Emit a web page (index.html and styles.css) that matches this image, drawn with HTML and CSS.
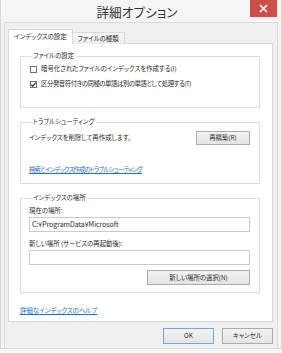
FILE: index.html
```html
<!DOCTYPE html>
<html lang="ja">
<head>
<meta charset="utf-8">
<link rel="stylesheet" href="styles.css">
</head>
<body>
<div class="window">
  <div class="titlebar">
    <span class="title">詳細オプション</span>
    <span class="close"><svg width="9" height="9" viewBox="0 0 9 9"><path d="M1 1L8 8M8 1L1 8" stroke="#fff" stroke-width="1.6"/></svg></span>
  </div>
  <div class="client">
    <div class="tabs">
      <div class="tab active">インデックスの設定</div>
      <div class="tab">ファイルの種類</div>
    </div>
    <div class="panel">
      <fieldset class="group g1">
        <legend>ファイルの設定</legend>
        <div class="check first"><span class="box"></span><span>暗号化されたファイルのインデックスを作成する(I)</span></div>
        <div class="check second"><span class="box"><svg width="7" height="7" viewBox="0 0 7 7"><path d="M1.2 3.6L2.8 5.2L5.8 1.6" fill="none" stroke="#222" stroke-width="1.2"/></svg></span><span class="tight">区分発音符付きの同種の単語は別の単語として処理する(T)</span></div>
      </fieldset>
      <fieldset class="group g2">
        <legend>トラブルシューティング</legend>
        <div class="row">
          <span>インデックスを削除して再作成します。</span>
          <button class="btn rebuild">再構築(R)</button>
        </div>
        <a class="link trouble" href="#">検索とインデックス作成のトラブルシューティング</a>
      </fieldset>
      <fieldset class="group g3">
        <legend>インデックスの場所</legend>
        <div class="label l1">現在の場所:</div>
        <div class="field">C:¥ProgramData¥Microsoft</div>
        <div class="label l2">新しい場所 (サービスの再起動後):</div>
        <div class="field"></div>
        <div class="right"><button class="btn choose">新しい場所の選択(N)</button></div>
      </fieldset>
      <a class="link help" href="#">詳細なインデックスのヘルプ</a>
    </div>
    <div class="actions">
      <button class="btn ok">OK</button>
      <button class="btn">キャンセル</button>
    </div>
  </div>
</div>
</body>
</html>
```
FILE: styles.css
```css
* { box-sizing: border-box; }
html, body { margin: 0; padding: 0; background: #f7f7f7; }
body {
  font-family: "Noto Sans CJK JP", "Noto Sans", sans-serif;
  font-feature-settings: "palt";
  color: #2a2a2a;
  font-size: 6.4px;
  line-height: 10px;
}
.window {
  width: 282px;
  height: 349px;
  background: #f5f5f5;
  border: 1px solid #d6d6d6;
  border-top: none;
}
.titlebar {
  position: relative;
  height: 22px;
  display: flex;
  align-items: center;
  justify-content: center;
}
.title {
  font-size: 12.7px;
  line-height: 16px;
  color: #333;
  margin-top: 2px;
  margin-right: 8px;
}
.close {
  position: absolute;
  top: 0;
  right: 4px;
  width: 27px;
  height: 17px;
  background: #c9504b;
  display: flex;
  align-items: center;
  justify-content: center;
}
.client {
  margin: 0 3px;
  background: #f0f0f0;
  border: 1px solid #dadada;
  padding: 6px 4px 4px 3px;
}
.tabs {
  display: flex;
  align-items: flex-end;
  height: 15px;
  margin-bottom: -1px;
  position: relative;
  z-index: 1;
}
.tab {
  height: 12px;
  line-height: 11px;
  padding: 0 5px;
  border: 1px solid #d9d9d9;
  border-bottom: none;
  background: linear-gradient(#f7f7f7, #ececec);
  margin-left: -1px;
}
.tab.active {
  height: 15px;
  line-height: 13px;
  background: #fff;
  margin-left: 0;
  padding: 0 5px;
  position: relative;
  z-index: 2;
}
.panel {
  background: #fff;
  border: 1px solid #d9d9d9;
  height: 279px;
  padding-top: 7px;
}
.group {
  border: 1px solid #dcdcdc;
  margin: 0 12px 0 11px;
  padding: 0 9px 0 8px;
  min-width: 0;
}
.group legend {
  padding: 0 2px;
  margin-left: 2px;
  line-height: 10px;
}
.g1 { padding-bottom: 18px; }
.g2 { margin-top: 9px; padding-bottom: 8px; }
.g3 { margin-top: 9px; padding-bottom: 7px; }
.check {
  display: flex;
  align-items: center;
  height: 10px;
}
.check.first { margin-top: 3px; }
.check.second { margin-top: 5px; }
.tight { letter-spacing: -0.45px; }
.box {
  width: 7px;
  height: 7px;
  border: 1px solid #707070;
  background: #fff;
  margin-left: 1px;
  margin-right: 4px;
  display: flex;
  align-items: center;
  justify-content: center;
  flex: none;
}
.box svg { display: block; margin: -1px; }
.row {
  display: flex;
  align-items: center;
  justify-content: space-between;
  height: 14px;
  margin-top: 4px;
}
.btn {
  font-family: inherit;
  font-feature-settings: "palt";
  font-size: 6.4px;
  line-height: 10px;
  color: #2a2a2a;
  height: 14px;
  padding: 0;
  background: linear-gradient(#f3f3f3, #e4e4e4);
  border: 1px solid #acacac;
  border-radius: 0;
}
.rebuild { width: 54px; }
.link {
  color: #2470c8;
  text-decoration: underline;
  display: block;
  width: max-content;
}
.trouble { margin-top: 20px; letter-spacing: -0.85px; }
.label { height: 10px; }
.l1 { margin-top: 3px; }
.l2 { margin-top: 7px; }
.field {
  height: 15px;
  border: 1px solid #c9c9c9;
  background: #fff;
  padding: 0 2px;
  line-height: 13px;
  margin-top: 1px;
  font-size: 6.9px;
}
.right {
  display: flex;
  justify-content: flex-end;
  margin-top: 5px;
}
.choose { width: 103px; height: 15px; }
.help { margin: 13px 0 0 11px; }
.actions {
  display: flex;
  justify-content: flex-end;
  gap: 8px;
  margin-top: 6px;
}
.actions .btn { width: 51px; height: 16px; }
.actions .ok { border-color: #6aa8e6; }
```
